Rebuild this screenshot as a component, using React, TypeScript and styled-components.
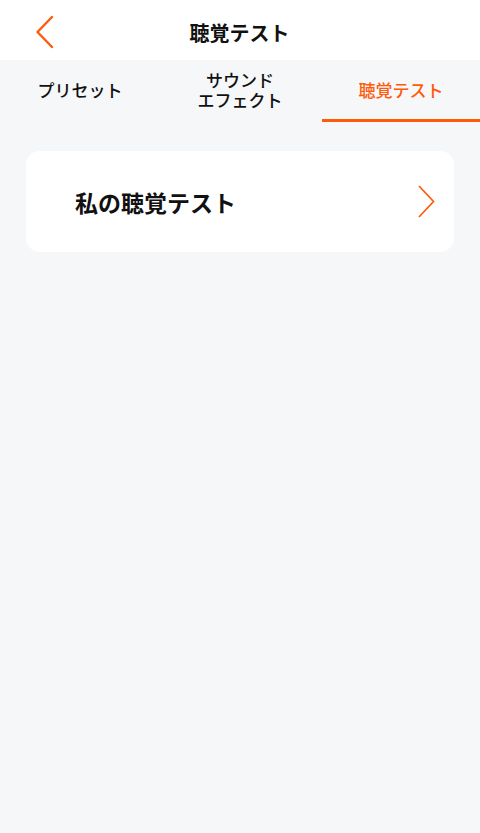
import styled, { createGlobalStyle } from "styled-components";

const ORANGE = "#ff5a0a";

const GlobalStyle = createGlobalStyle`
  html, body {
    margin: 0;
    padding: 0;
    background: #f6f7f9;
    font-family: "Noto Sans CJK JP", "Noto Sans", sans-serif;
  }
`;

const tabs = ["プリセット", "サウンド\nエフェクト", "聴覚テスト"];

const App = () => {
  const active = 2;
  return (
    <Page>
      <GlobalStyle />
      <Header>
        <BackButton aria-label="back">
          <svg width="19" height="34" viewBox="0 0 19 34">
            <path d="M16 2 L1.5 17 L16 32" fill="none" stroke={ORANGE} strokeWidth="2.4" strokeLinecap="round" strokeLinejoin="round" />
          </svg>
        </BackButton>
        <Title>聴覚テスト</Title>
      </Header>
      <TabBar>
        {tabs.map((t, i) => (
          <Tab key={t} $active={i === active}>
            <TabLabel $active={i === active}>{t}</TabLabel>
          </Tab>
        ))}
      </TabBar>
      <Card>
        <CardLabel>私の聴覚テスト</CardLabel>
        <svg width="17" height="33" viewBox="0 0 17 33">
          <path d="M1 1 L15.5 16.5 L1 32" fill="none" stroke={ORANGE} strokeWidth="1.7" />
        </svg>
      </Card>
    </Page>
  );
};

export default App;

const Page = styled.div`
  min-height: 833px;
  background: #f6f7f9;
  display: flex;
  flex-direction: column;
`;

const Header = styled.header`
  position: relative;
  height: 60px;
  background: #fff;
  display: flex;
  align-items: center;
  justify-content: center;
`;

const BackButton = styled.button`
  position: absolute;
  left: 36px;
  top: 15px;
  padding: 0;
  border: none;
  background: none;
  display: flex;
`;

const Title = styled.h1`
  margin: 0 0 0 -1px;
  font-size: 20px;
  font-weight: 700;
  color: #111;
  line-height: 1;
  padding-top: 6px;
`;

const TabBar = styled.nav`
  height: 62px;
  display: grid;
  grid-template-columns: repeat(3, 1fr);
`;

const Tab = styled.div<{ $active: boolean }>`
  display: flex;
  align-items: center;
  justify-content: center;
  margin-left: ${(p) => (p.$active ? "2px" : "0")};
  border-bottom: 3px solid ${(p) => (p.$active ? ORANGE : "transparent")};
`;

const TabLabel = styled.span<{ $active: boolean }>`
  white-space: pre-line;
  text-align: center;
  font-size: 17px;
  line-height: 20px;
  font-weight: 500;
  color: ${(p) => (p.$active ? ORANGE : "#111")};
`;

const Card = styled.div`
  margin: 29px 26px 0;
  height: 101px;
  background: #fff;
  border-radius: 14px;
  display: flex;
  align-items: center;
  justify-content: space-between;
  padding: 0 19px 0 49px;
  box-sizing: border-box;
`;

const CardLabel = styled.span`
  font-size: 23px;
  font-weight: 700;
  color: #111;
`;
